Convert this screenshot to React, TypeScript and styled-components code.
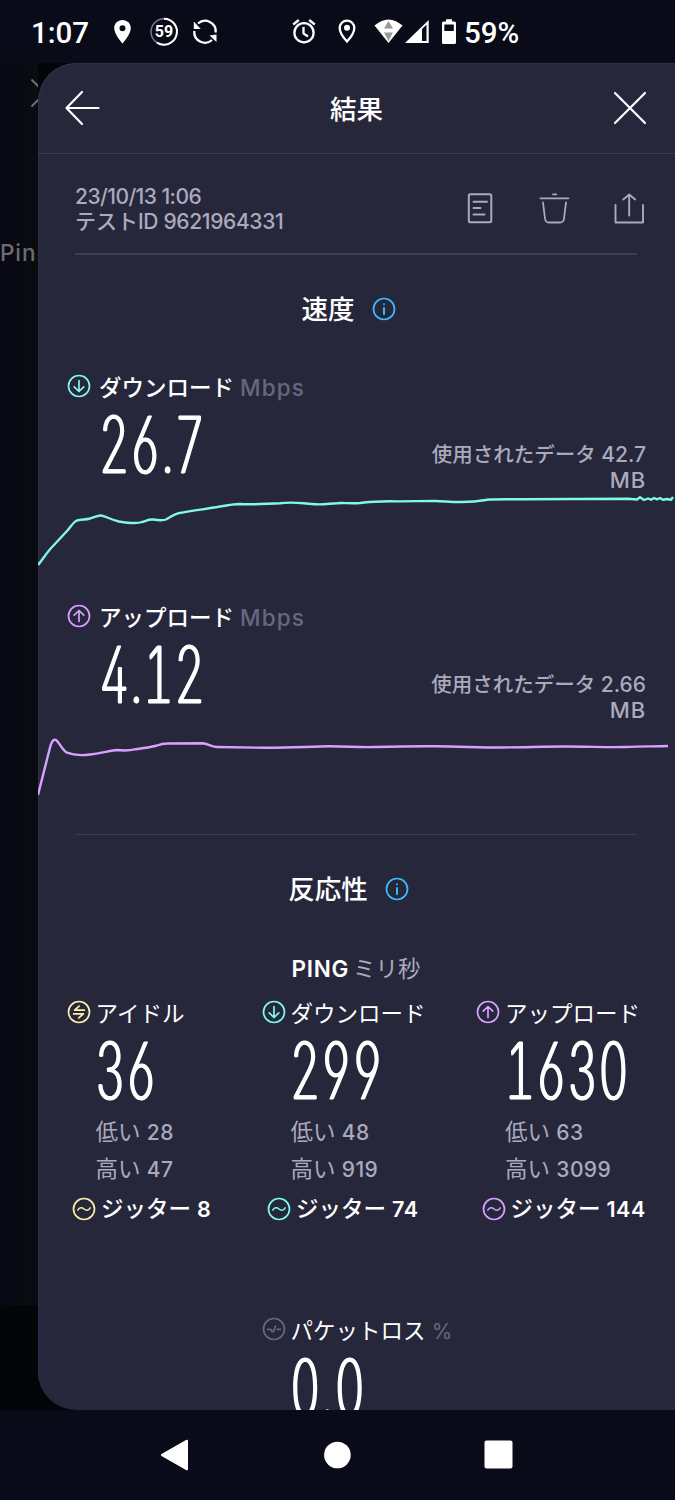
import React from 'react';
import styled, { createGlobalStyle } from 'styled-components';

const color = {
  system: '#090b19',
  sheet: '#27273b',
  line: '#3c3c52',
  text: '#ffffff',
  soft: '#aaaabf',
  dim: '#67677f',
  cyan: '#80f8ee',
  purple: '#d7a2ff',
  yellow: '#fbf0a9',
  blue: '#3fbdfb',
};

const GlobalStyle = createGlobalStyle`
  * { box-sizing: border-box; }
  body {
    margin: 0;
    background: ${color.system};
    color: ${color.text};
    font-family: Inter, 'Noto Sans CJK JP', sans-serif;
    font-weight: 500;
  }
  svg { display: block; flex: none; }
`;

const Screen = styled.div`
  width: 675px;
  height: 1500px;
  display: flex;
  flex-direction: column;
  overflow: hidden;
`;

const StatusBar = styled.header`
  height: 63px;
  flex: none;
  display: flex;
  align-items: center;
  background: ${color.system};
`;

const StatusText = styled.span<{ $left: number }>`
  margin-left: ${(p) => p.$left}px;
  width: 60px;
  white-space: nowrap;
  font: 500 29.5px/36px Roboto, sans-serif;
  padding-top: 3px;
`;

const Body = styled.div`
  height: 1347px;
  flex: none;
  display: flex;
  background: #040508;
`;

const Backdrop = styled.div`
  width: 38px;
  flex: none;
  height: 1242px;
  background: linear-gradient(90deg, #070814, #0b0c10);
`;

const BackdropClose = styled.div`
  height: 60px;
  padding: 16px 0 0 31px;
  overflow: hidden;
`;

const BackdropLabel = styled.div`
  margin-top: 114px;
  font-size: 22.5px;
  line-height: 31px;
  letter-spacing: 0.9px;
  color: #6d6d6f;
  white-space: nowrap;
`;

const Sheet = styled.main`
  width: 637px;
  height: 1347px;
  background: ${color.sheet};
  border-radius: 38px 0 0 38px;
  box-shadow: inset 1px 1px 0 #2f2f45;
  overflow: hidden;
`;

const SheetHeader = styled.div`
  height: 91px;
  border-bottom: 1px solid ${color.line};
  display: flex;
  align-items: center;
  justify-content: space-between;
  padding: 0 28px 0 27px;
`;

const Title = styled.h1<{ $drop?: number }>`
  margin: 0;
  padding-top: ${(p) => p.$drop ?? 0}px;
  font-size: 26.5px;
  line-height: 36px;
  font-weight: 500;
`;

const Meta = styled.div`
  height: 99px;
  display: flex;
  justify-content: space-between;
  padding: 30px 30px 0 37px;
`;

const MetaText = styled.div`
  font-size: 21px;
  line-height: 25px;
  color: ${color.soft};
  white-space: nowrap;
`;

const MetaActions = styled.div`
  display: flex;
  padding-top: 9px;
  gap: 43.5px;
`;

const Divider = styled.div<{ $height: number; $top?: number }>`
  height: ${(p) => p.$height}px;
  margin: ${(p) => p.$top ?? 0}px 38px 0 37px;
  background: ${color.line};
`;

const SectionTitle = styled.div`
  height: 108px;
  display: flex;
  align-items: center;
  justify-content: center;
  gap: 17px;
  padding-right: 16px;
`;

const Metric = styled.section`
  height: 230px;
  display: flex;
  flex-direction: column;
`;

const LabelRow = styled.div<{ $gap: number; $weight?: number }>`
  height: 26px;
  display: flex;
  align-items: center;
  gap: ${(p) => p.$gap}px;
  font-size: 22.5px;
  font-weight: ${(p) => p.$weight ?? 500};
  line-height: 26px;
  white-space: nowrap;
`;

const LabelIcon = styled.span`
  padding-bottom: 2px;
`;

const LabelText = styled.span`
  padding-top: 2px;
`;

const MetricHead = styled.div`
  padding: 11px 0 0 28.5px;
`;

const MetricValues = styled.div`
  height: 90px;
  display: flex;
  justify-content: space-between;
  padding: 0 29px 0 61px;
`;

const BigNumber = styled.div`
  width: 140px;
  height: 90px;
  padding-top: 15px;
  font: 200 78.5px/60px Inter, sans-serif;
  font-feature-settings: 'cv02', 'cv03', 'cv04', 'tnum';
  letter-spacing: 1.1px;
  transform: scaleX(0.6);
  transform-origin: left;
  -webkit-text-stroke: 1.1px #fff;
  text-shadow: 1.7px 0 #fff, -1.7px 0 #fff;
  white-space: nowrap;
`;

const DataUsed = styled.div`
  padding-top: 42px;
  text-align: right;
  font-size: 20.5px;
  line-height: 25.5px;
  color: ${color.soft};
`;

const Latin = styled.span<{ $size?: number; $track?: number; $color?: string; $weight?: number }>`
  font-size: ${(p) => p.$size ?? 21}px;
  letter-spacing: ${(p) => p.$track ?? 0}px;
  font-weight: ${(p) => p.$weight ?? 500};
  ${(p) => p.$color && `color: ${p.$color};`}
`;

const PingTitle = styled.div`
  height: 26px;
  margin-top: 13px;
  padding-left: 253.5px;
  display: flex;
  gap: 4px;
  line-height: 26px;
  font-size: 22.5px;
  font-weight: 400;
  color: ${color.soft};
`;

const PingGrid = styled.div`
  margin-top: 18px;
  padding-left: 28.5px;
  display: grid;
  grid-template-columns: 195px 214.5px 1fr;
`;

const PingCell = styled.div`
  white-space: nowrap;
`;

const Indent = styled.div<{ $left: number }>`
  padding-left: ${(p) => p.$left}px;
`;

const Ranges = styled(Indent)`
  margin-top: -3px;
`;

const Range = styled.div`
  height: 37px;
  line-height: 37px;
  font-size: 22.5px;
  font-weight: 400;
  color: ${color.soft};
`;

const JitterRow = styled.div`
  height: 26px;
  margin-top: 9px;
  padding-left: 5.5px;
  display: flex;
  align-items: center;
  gap: 5px;
  font-size: 22.5px;
  line-height: 26px;
`;

const PacketLoss = styled.div`
  margin-top: 95px;
  padding-left: 223.5px;
`;

const NavBar = styled.nav`
  height: 90px;
  flex: none;
  display: flex;
  align-items: center;
  justify-content: space-between;
  background: ${color.system};
  padding: 0 161px 0 160px;
`;

type IconKind = 'down' | 'up' | 'idle' | 'jitter' | 'loss' | 'info';

const glyphs: Record<IconKind, React.ReactNode> = {
  down: <path d="M12 6.5v11M7.2 12.8l4.8 4.7 4.8-4.7" />,
  up: <path d="M12 17.5v-11M7.2 11.2L12 6.5l4.8 4.7" />,
  idle: <path d="M17.3 10.1H7.6l4.6-4M6.7 13.9h9.7l-4.6 4" />,
  jitter: <path d="M5.8 13.2c1.8-3.2 4.2-3 6.2-1.2s4.400 2 6.200-1.200" strokeWidth="1.5" />,
  loss: <path d="M5.6 12.3h3.2l1.200 2.200M18.400 12.300h-3.200M11.300 14.800l2.300-5.600" />,
  info: <path d="M12 11v6M12 7.1v.2" strokeWidth="1.9" />,
};

const RoundIcon = ({ kind, tint }: { kind: IconKind; tint: string }) => (
  <svg width="24" height="24" viewBox="0 0 24 24" fill="none" stroke={tint} strokeWidth="1.7" strokeLinecap="round" strokeLinejoin="round">
    <circle cx="12" cy="12" r="10.5" />
    {glyphs[kind]}
  </svg>
);

const Chart = ({ d, tint }: { d: string; tint: string }) => (
  <svg width="637" height="90" viewBox="38 490 637 90" fill="none" stroke={tint} strokeWidth="2.4" strokeLinejoin="round">
    <path d={d} />
  </svg>
);

const downloadPath =
  'M38 565C43 559 47 552 53 546L67 531C71 527 73 522 77 520.5C82 519 85 520 90 518.5C96 516.500 98 515.300 101 515.500C107 516.500 110 519.500 119 521.500C128 523 137 524 142 522C147 520.500 149 519 153 519.500C159 520.500 162 521 166 519.500C171 517 173 514.500 178 513.300C192 510.500 207 509 220 506.500C228 505 234 504 240 504C253 505 268 503.500 280 503.300C292 501.500 300 503.200 312 504C322 505.300 329 503.500 337 503.200C345 502.500 349 504 360 503C370 501.500 380 501.700 390 501.300C405 501.500 420 501 435 501C445 501.200 451 502.200 462 502C475 502 480 501 487 499.800C495 499 510 499.500 525 499.200C555 499.200 600 498.700 628 498.700L637 499.500L640 497.300L644 500L648 498.500L651 499.700L654 498L657 499.300L660 498L663 499.800L667 499L671 499.800L673 497';

const uploadPath =
  'M38 565L50 517.500C52 510 54 509 56 510C60 513 62 520 67 522.700C74 525.500 82 525.500 90 524.500C101 523.500 107 521 117 520C125 521 128 521 136 519.200C145 518 151 517 157 515.500C162 513.500 164 513.300 169 513.500L203 513.300C209 514 212 517 217 517L265 517.800C290 518 310 516.500 330 516.300C350 516.500 360 517.500 375 517C395 516.500 415 516 435 516.300C460 516.500 480 517.500 500 517.500C525 517.300 545 516.500 565 516.500C590 516.500 607 517.500 625 517C645 516.300 655 516.500 668 516';

const StatusIcons = () => (
  <svg width="370" height="63" viewBox="91 0 370 63" fill="#fff">
    <path fillRule="evenodd" d="M122.500 20c-4.700 0-8.300 3.600-8.300 8.200 0 6.300 8.300 15.300 8.300 15.300s8.300-9 8.300-15.300c0-4.600-3.600-8.200-8.300-8.200zm0 5.200a3 3 0 1 1 0 6 3 3 0 0 1 0-6z" />
    <g fill="none" stroke="#fff">
      <circle cx="164" cy="31.700" r="13" stroke="#77798a" strokeWidth="1.500" />
      <path d="M164 18.700a13 13 0 1 1-7 24" strokeWidth="2" />
      <path d="M198 23.500A10.700 10.700 0 0 1 215.700 32.500M212 40A10.700 10.700 0 0 1 194.300 31" strokeWidth="2.300" />
    </g>
    <path d="M193.800 21.500v7.500h7zM216.500 42v-7.500l-7 1z" />
    <text x="164" y="37.200" textAnchor="middle" fontFamily="Roboto, sans-serif" fontWeight="700" fontSize="16">59</text>
    <g fill="none" stroke="#fff" strokeWidth="2.300">
      <circle cx="304" cy="32.700" r="9.600" />
      <path d="M303.500 27v6.500l4.500 3M293.200 24.500l5.600-4.500M309.200 20l5.600 4.500" />
      <path d="M347 41.500s-7.300-8-7.300-13.600a7.300 7.300 0 0 1 14.600 0c0 5.600-7.300 13.600-7.300 13.600z" />
    </g>
    <circle cx="347" cy="27.800" r="3" />
    <path d="M374.500 25.500Q388.500 13.500 402.500 25.500L388.500 43z" />
    <path d="M388.500 21l4.500 7.500h-9zM388.500 41l-4.500-8.500h9z" fill="#999" />
    <path fillRule="evenodd" d="M405 43L428.700 20V43zM422 29v12h4.500V24.800z" />
    <path fillRule="evenodd" d="M446 19.300h6v2.200h2.500q1.500 0 1.500 1.500v19.500q0 1.500-1.500 1.500h-11q-1.500 0-1.500-1.500V23q0-1.500 1.500-1.500h2.500zM444.300 24.500v6.500h9.500v-6.500z" />
  </svg>
);

interface PingProps {
  kind: IconKind;
  tint: string;
  label: string;
  value: string;
  low: string;
  high: string;
  jitter: string;
}

const pings: PingProps[] = [
  { kind: 'idle', tint: color.yellow, label: 'アイドル', value: '36', low: '28', high: '47', jitter: '8' },
  { kind: 'down', tint: color.cyan, label: 'ダウンロード', value: '299', low: '48', high: '919', jitter: '74' },
  { kind: 'up', tint: color.purple, label: 'アップロード', value: '1630', low: '63', high: '3099', jitter: '144' },
];

const Ping = ({ kind, tint, label, value, low, high, jitter }: PingProps) => (
  <PingCell>
    <LabelRow $gap={5} $weight={400}>
      <LabelIcon><RoundIcon kind={kind} tint={tint} /></LabelIcon>
      <LabelText>{label}</LabelText>
    </LabelRow>
    <Indent $left={28.5}><BigNumber>{value}</BigNumber></Indent>
    <Ranges $left={29}>
      <Range>低い <Latin $track={0.4}>{low}</Latin></Range>
      <Range>高い <Latin $track={0.4}>{high}</Latin></Range>
    </Ranges>
    <JitterRow>
      <RoundIcon kind="jitter" tint={tint} />
      <span>ジッター <Latin $weight={600} $size={21.5} $track={0.5}>{jitter}</Latin></span>
    </JitterRow>
  </PingCell>
);

interface SpeedProps {
  kind: IconKind;
  tint: string;
  label: string;
  value: string;
  used: string;
  path: string;
}

const Speed = ({ kind, tint, label, value, used, path }: SpeedProps) => (
  <Metric>
    <MetricHead>
      <LabelRow $gap={8.5}>
        <LabelIcon><RoundIcon kind={kind} tint={tint} /></LabelIcon>
        <LabelText>{label} <Latin $size={22.5} $track={1.1} $color={color.dim}>Mbps</Latin></LabelText>
      </LabelRow>
    </MetricHead>
    <MetricValues>
      <BigNumber>{value}</BigNumber>
      <DataUsed>使用されたデータ <Latin>{used}</Latin><br /><Latin $size={22} $track={0.8}>MB</Latin></DataUsed>
    </MetricValues>
    <Chart d={path} tint={tint} />
  </Metric>
);

export default function App() {
  return (
    <>
      <GlobalStyle />
      <Screen>
        <StatusBar>
          <StatusText $left={31}>1:07</StatusText>
          <StatusIcons />
          <StatusText $left={3}>59%</StatusText>
        </StatusBar>
        <Body>
          <Backdrop>
            <BackdropClose>
              <svg width="28" height="28" viewBox="0 0 28 28" stroke="#6d6d6f" strokeWidth="2">
                <path d="M0.500 0.500l27 27M27.500 0.500l-27 27" />
              </svg>
            </BackdropClose>
            <BackdropLabel>Pin</BackdropLabel>
          </Backdrop>
          <Sheet>
            <SheetHeader>
              <svg width="35" height="36" viewBox="0 0 35 36" fill="none" stroke="#fff" strokeWidth="2.200" strokeLinecap="round" strokeLinejoin="round">
                <path d="M33.500 18H1.500M17 2L1.500 18 17 34" />
              </svg>
              <Title $drop={2}>結果</Title>
              <svg width="34" height="34" viewBox="0 0 34 34" fill="none" stroke="#fff" strokeWidth="2.200" strokeLinecap="round">
                <path d="M2 2l30 30M32 2L2 32" />
              </svg>
            </SheetHeader>
            <Meta>
              <MetaText>
                <Latin $track={-0.55}>23/10/13 1:06</Latin><br />
                テスト<Latin $track={-0.35}>ID 9621964331</Latin>
              </MetaText>
              <MetaActions>
                <svg width="27" height="32" viewBox="0 0 27 32" fill="none" stroke={color.soft} strokeWidth="2" strokeLinecap="round">
                  <rect x="1.800" y="1.300" width="22.500" height="28" rx="1.500" />
                  <path d="M6.500 8.700h13.500M6.500 15h7M6.500 21.500h11" />
                </svg>
                <svg width="32" height="32" viewBox="0 0 32 32" fill="none" stroke={color.soft} strokeWidth="1.800" strokeLinecap="round">
                  <path d="M15 1.300h3.300M2.500 5.300h28M5 9.500l2 16q.5 4 4 4h11q3.500 0 4-4l2-16" />
                </svg>
                <svg width="32" height="32" viewBox="0 0 32 32" fill="none" stroke={color.soft} strokeWidth="1.900" strokeLinecap="round" strokeLinejoin="round">
                  <path d="M2.500 12v17.500H30V12M16.200 22.500V1.500M10.200 6.500l6-5 6 5" />
                </svg>
              </MetaActions>
            </Meta>
            <Divider $height={2} />
            <SectionTitle>
              <Title>速度</Title>
              <RoundIcon kind="info" tint={color.blue} />
            </SectionTitle>
            <Speed kind="down" tint={color.cyan} label="ダウンロード" value="26.7" used="42.7" path={downloadPath} />
            <Speed kind="up" tint={color.purple} label="アップロード" value="4.12" used="2.66" path={uploadPath} />
            <Divider $height={1} $top={11} />
            <SectionTitle>
              <Title>反応性</Title>
              <RoundIcon kind="info" tint={color.blue} />
            </SectionTitle>
            <PingTitle>
              <Latin $color="#fff" $weight={600} $size={22.5} $track={0.7}>PING</Latin>
              <span>ミリ秒</span>
            </PingTitle>
            <PingGrid>
              {pings.map((p) => <Ping key={p.label} {...p} />)}
            </PingGrid>
            <PacketLoss>
              <LabelRow $gap={5} $weight={400}>
                <LabelIcon><RoundIcon kind="loss" tint={color.dim} /></LabelIcon>
                <LabelText>パケットロス <Latin $color={color.dim} $weight={400}>%</Latin></LabelText>
              </LabelRow>
              <Indent $left={28.5}><BigNumber>0.0</BigNumber></Indent>
            </PacketLoss>
          </Sheet>
        </Body>
        <NavBar>
          <svg width="28" height="32" viewBox="0 0 28 32" fill="#fff"><path d="M26 1q2-1 2 1v28q0 2-2 1L1.500 17q-1.500-1 0-2z" /></svg>
          <svg width="30" height="28" viewBox="0 0 30 28" fill="#fff"><circle cx="16.400" cy="14" r="13.300" /></svg>
          <svg width="30" height="30" viewBox="0 0 30 30" fill="#fff"><rect x="0.500" y="0.500" width="28" height="28" rx="2" /></svg>
        </NavBar>
      </Screen>
    </>
  );
}
